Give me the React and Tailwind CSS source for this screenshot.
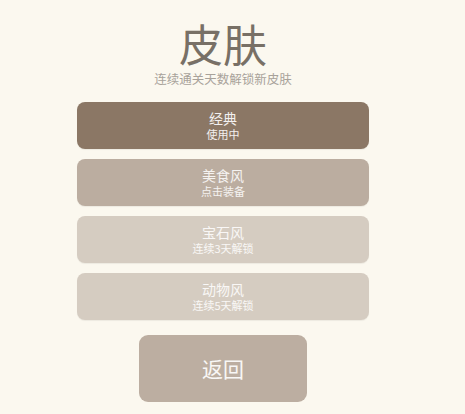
export default function App() {
  const skins = [
    { name: "经典", sub: "使用中", bg: "bg-[#8b7765]", text: "text-white/90" },
    { name: "美食风", sub: "点击装备", bg: "bg-[#bbada0]", text: "text-white/85" },
    { name: "宝石风", sub: "连续3天解锁", bg: "bg-[#d5ccc1]", text: "text-white/85" },
    { name: "动物风", sub: "连续5天解锁", bg: "bg-[#d5ccc1]", text: "text-white/85" },
  ];

  return (
    <div
      className="w-[465px] h-[414px] bg-[#fbf8ef] overflow-hidden"
      style={{ fontFamily: '"Noto Sans CJK SC", "Noto Sans", sans-serif' }}
    >
      <div className="w-[446px] flex flex-col items-center">
        <h1 className="mt-[21px] text-[44px] leading-none text-[#787066]">皮肤</h1>
        <p className="mt-[8px] text-[12.5px] leading-none text-[#a8a29a]">连续通关天数解锁新皮肤</p>

        <div className="mt-[16px] flex flex-col gap-[10px]">
          {skins.map((s) => (
            <div
              key={s.name}
              className={`w-[292px] h-[47px] rounded-[8px] ${s.bg} ${s.text} flex flex-col items-center justify-center gap-[4px] shadow-[0_1px_1px_rgba(0,0,0,0.06)]`}
            >
              <span className="text-[14px] leading-none">{s.name}</span>
              <span className="text-[11px] leading-none">{s.sub}</span>
            </div>
          ))}
        </div>

        <div className="mt-[15px] w-[168px] h-[67px] rounded-[9px] bg-[#bcaea1] text-white/90 flex items-center justify-center">
          <span className="text-[21px] leading-none">返回</span>
        </div>
      </div>
    </div>
  );
}
